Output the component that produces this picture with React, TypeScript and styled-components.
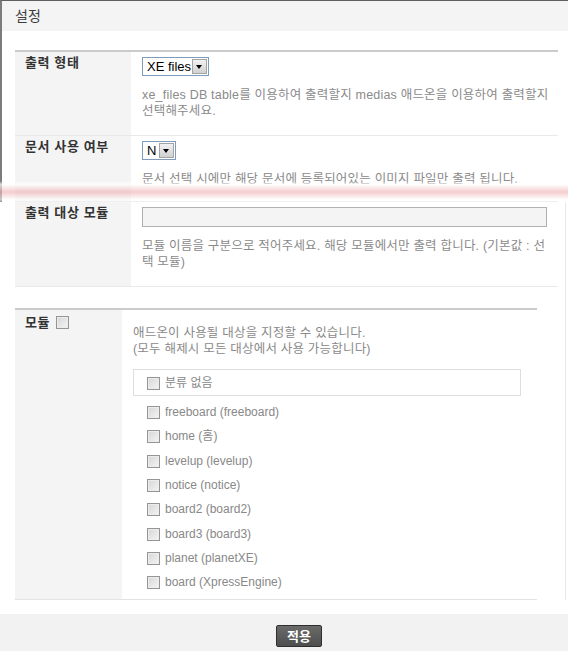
import React from 'react'
import styled, { createGlobalStyle } from 'styled-components'

const GlobalStyle = createGlobalStyle`
  html, body {
    margin: 0;
    padding: 0;
    background: #fff;
  }
  body {
    font-family: "Liberation Sans", "Noto Sans CJK KR", sans-serif;
    font-size: 12px;
    color: #333;
  }
`

const modules = [
  'freeboard (freeboard)',
  'home (홈)',
  'levelup (levelup)',
  'notice (notice)',
  'board2 (board2)',
  'board3 (board3)',
  'planet (planetXE)',
  'board (XpressEngine)'
]

function SelectBox({ value, width }: { value: string; width: number }) {
  return (
    <Select style={{ width }}>
      <SelectValue>{value}</SelectValue>
      <SelectArrow />
    </Select>
  )
}

function App() {
  return (
    <>
      <GlobalStyle />
      <Page>
        <Upper>
          <Header>설정</Header>
          <UpperBody>
            <FormTable $width={543}>
              <Row $cols={116}>
                <Th>출력 형태</Th>
                <Td>
                  <SelectBox value='XE files' width={67} />
                  <Desc>
                    xe_files DB table를 이용하여 출력할지 medias 애드온을 이용하여 출력할지
                    <br />
                    선택해주세요.
                  </Desc>
                </Td>
              </Row>
              <Row $cols={116}>
                <Th>문서 사용 여부</Th>
                <Td $bottom={14}>
                  <SelectBox value='N' width={34} />
                  <Desc>문서 선택 시에만 해당 문서에 등록되어있는 이미지 파일만 출력 됩니다.</Desc>
                </Td>
              </Row>
            </FormTable>
          </UpperBody>
        </Upper>

        {/* cut mark between the two screenshot parts */}
        <TearMark />

        <Lower>
          <FormTable $width={543} $continued>
            <Row $cols={116}>
              <Th>출력 대상 모듈</Th>
              <Td>
                <TextInput type='text' readOnly />
                <Desc>
                  모듈 이름을 구분으로 적어주세요. 해당 모듈에서만 출력 합니다. (기본값 : 선
                  <br />
                  택 모듈)
                </Desc>
              </Td>
            </Row>
          </FormTable>

          <ModuleTable>
            <Row $cols={107}>
              <Th $top={5}>
                모듈 <Check type='checkbox' />
              </Th>
              <ModuleTd>
                <Desc $flush>
                  애드온이 사용될 대상을 지정할 수 있습니다.
                  <br />
                  (모두 해제시 모든 대상에서 사용 가능합니다)
                </Desc>
                <GroupBox>
                  <Check type='checkbox' />
                  <ItemLabel>분류 없음</ItemLabel>
                </GroupBox>
                <ModuleList>
                  {modules.map((m) => (
                    <ModuleItem key={m}>
                      <Check type='checkbox' />
                      <ItemLabel>{m}</ItemLabel>
                    </ModuleItem>
                  ))}
                </ModuleList>
              </ModuleTd>
            </Row>
          </ModuleTable>
        </Lower>

        <Footer>
          <ApplyButton type='button'>적용</ApplyButton>
        </Footer>
      </Page>
    </>
  )
}
export default App

const Page = styled.div`
  position: relative;
  width: 568px;
`

const Upper = styled.div`
  border-top: 1px solid #5e5e5e;
  border-left: 2px solid #7c7c7c;
`

const Header = styled.div`
  height: 30px;
  line-height: 30px;
  padding-left: 13px;
  background: #f4f4f4;
  font-size: 14px;
  color: #3c3c3c;
`

const UpperBody = styled.div`
  padding: 19px 0 0 13px;
`

const Lower = styled.div`
  width: 550px;
  padding-left: 15px;
  border-right: 1px solid #e8e8e8;
`

const FormTable = styled.div<{ $width: number; $continued?: boolean }>`
  width: ${(p) => p.$width}px;
  border-top: ${(p) => (p.$continued ? 'none' : '2px solid #cbcbcb')};
`

const Row = styled.div<{ $cols: number }>`
  display: grid;
  grid-template-columns: ${(p) => p.$cols}px 1fr;
  border-bottom: 1px solid #e9e9e9;
`

const Th = styled.div<{ $top?: number }>`
  background: #f4f4f4;
  padding: ${(p) => p.$top ?? 3}px 10px 0;
  font-size: 13px;
  line-height: 16px;
  font-weight: bold;
  letter-spacing: 0.6px;
  color: #333;
  display: flex;
  align-items: flex-start;
  gap: 6px;
  white-space: nowrap;
`

const Td = styled.div<{ $bottom?: number }>`
  padding: 5px 6px ${(p) => p.$bottom ?? 16}px 11px;
`

const Desc = styled.p<{ $flush?: boolean }>`
  margin: ${(p) => (p.$flush ? 0 : '11px')} 0 0;
  font-size: 12.5px;
  letter-spacing: 0.2px;
  line-height: 16px;
  color: #8a8a8a;
  white-space: nowrap;
`

const Select = styled.div`
  display: flex;
  align-items: center;
  box-sizing: border-box;
  height: 19px;
  padding: 1px;
  border: 1px solid #7f9db9;
  background: #fff;
`

const SelectValue = styled.span`
  flex: 1;
  padding-left: 3px;
  overflow: hidden;
  white-space: nowrap;
  font-family: "Liberation Sans", Arial, sans-serif;
  font-size: 13px;
  line-height: 15px;
  color: #000;
`

const SelectArrow = styled.span`
  position: relative;
  flex: none;
  box-sizing: border-box;
  width: 15px;
  height: 15px;
  border: 1px solid #a4a4a4;
  background: linear-gradient(#f2f2f2, #d0d0d0);
  &:after {
    content: '';
    position: absolute;
    left: 3px;
    top: 5px;
    border-left: 3.5px solid transparent;
    border-right: 3.5px solid transparent;
    border-top: 4px solid #000;
  }
`

const TextInput = styled.input`
  display: block;
  box-sizing: border-box;
  width: 405px;
  height: 20px;
  margin: 0;
  border: 1px solid #b0b0b0;
  background: #f4f4f4;
`

const ModuleTable = styled.div`
  width: 522px;
  margin-top: 21px;
  border-top: 2px solid #cbcbcb;
  & > div {
    border-bottom: 1px solid #e3e3e3;
  }
`

const ModuleTd = styled.div`
  padding: 15px 16px 5px 11px;
`

const Check = styled.input`
  appearance: none;
  -webkit-appearance: none;
  flex: none;
  box-sizing: border-box;
  width: 13px;
  height: 13px;
  margin: 1px 0 0;
  border: 1px solid #959595;
  background: linear-gradient(135deg, #d6d6d6 0%, #f5f5f5 100%);
  box-shadow: inset 0 0 0 1px #ececec;
`

const GroupBox = styled.div`
  display: flex;
  align-items: center;
  gap: 5px;
  height: 25px;
  margin-top: 12px;
  padding: 0 13px;
  border: 1px solid #dedede;
`

const ItemLabel = styled.span`
  font-size: 12px;
  line-height: 16px;
  color: #888;
`

const ModuleList = styled.div`
  margin-top: 4px;
`

const ModuleItem = styled.div`
  display: flex;
  align-items: center;
  gap: 5px;
  height: 24.3px;
  padding-left: 14px;
`

const TearMark = styled.div`
  position: absolute;
  left: 0;
  right: 0;
  top: 181px;
  height: 22px;
  pointer-events: none;
  background: linear-gradient(
    to bottom,
    rgba(255, 255, 255, 0) 0%,
    rgba(255, 255, 255, 0.7) 15%,
    rgba(238, 178, 178, 0.65) 50%,
    rgba(255, 255, 255, 0.6) 85%,
    rgba(255, 255, 255, 0) 100%
  );
`

const Footer = styled.div`
  display: flex;
  justify-content: center;
  box-sizing: border-box;
  height: 38px;
  margin-top: 14px;
  padding: 11px 0 0 30px;
  background: #f2f2f2;
`

const ApplyButton = styled.button`
  width: 46px;
  height: 22px;
  padding: 0;
  border: 1px solid #2e2e2e;
  border-radius: 2px;
  background: linear-gradient(#6a6a6a, #4e4e4e);
  color: #fff;
  font-family: "Noto Sans CJK KR", sans-serif;
  font-size: 13px;
  font-weight: bold;
  line-height: 20px;
  cursor: pointer;
`
